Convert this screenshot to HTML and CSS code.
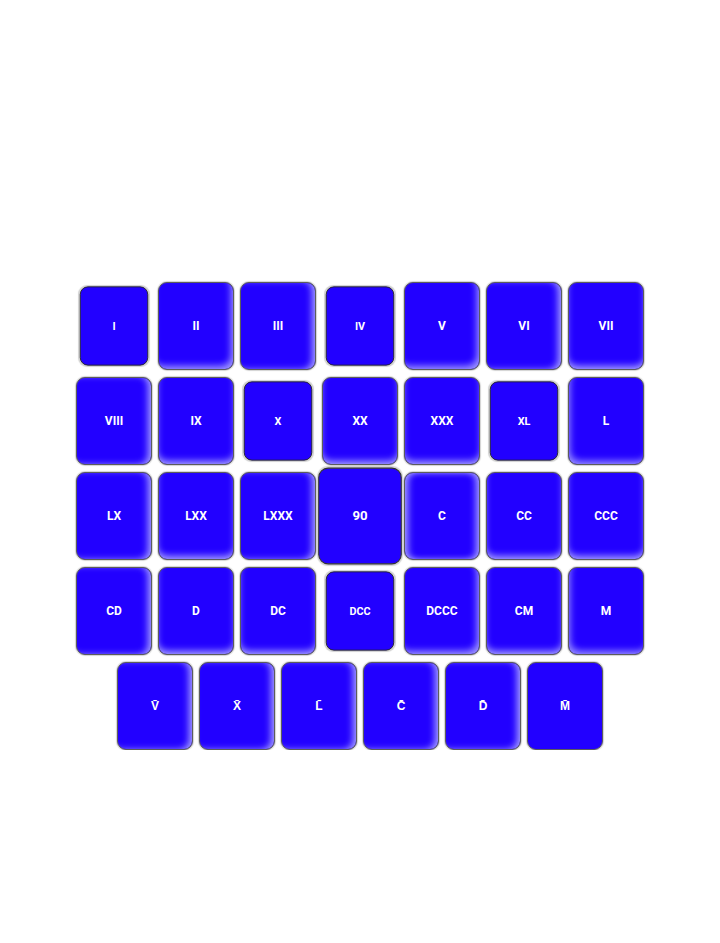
FILE: index.html
```html
<!DOCTYPE html>
<html lang="en">
<head>
    <meta charset="UTF-8">
    <meta name="viewport" content="width=device-width, initial-scale=1.0">
    <title>Roman Numerals</title>
    <link rel="stylesheet" href="styles.css">
</head>
<body>

    <div class="keypad">
        <div class="row">
            <button class="key small">I</button>
            <button class="key glow-br">II</button>
            <button class="key glow-r">III</button>
            <button class="key small">IV</button>
            <button class="key glow-br">V</button>
            <button class="key glow-r">VI</button>
            <button class="key glow-b">VII</button>
        </div>
        <div class="row">
            <button class="key glow-r">VIII</button>
            <button class="key glow-b">IX</button>
            <button class="key small">X</button>
            <button class="key glow-b">XX</button>
            <button class="key glow-b">XXX</button>
            <button class="key small">XL</button>
            <button class="key glow-bl">L</button>
        </div>
        <div class="row">
            <button class="key glow-r">LX</button>
            <button class="key glow-b">LXX</button>
            <button class="key glow-r">LXXX</button>
            <button class="key big">90</button>
            <button class="key glow-lr">C</button>
            <button class="key glow-b">CC</button>
            <button class="key glow-b">CCC</button>
        </div>
        <div class="row">
            <button class="key glow-r">CD</button>
            <button class="key glow-b">D</button>
            <button class="key glow-b">DC</button>
            <button class="key small">DCC</button>
            <button class="key glow-br">DCCC</button>
            <button class="key glow-b">CM</button>
            <button class="key glow-bl">M</button>
        </div>
        <div class="row">
            <button class="key glow-r">V̄</button>
            <button class="key glow-r">X̄</button>
            <button class="key glow-r">L̄</button>
            <button class="key glow-r">C̄</button>
            <button class="key glow-r">D̄</button>
            <button class="key">M̄</button>
        </div>
    </div>

</body>
</html>
```

FILE: styles.css
```css
body {
    margin: 0;
    background: #fff;
    font-family: Roboto, "Liberation Sans", Arial, sans-serif;
}
.keypad {
    padding-top: 282px;
    display: flex;
    flex-direction: column;
    gap: 7px;
}
.row {
    display: flex;
    justify-content: center;
}
.key {
    width: 76px;
    height: 88px;
    margin: 0 3px;
    padding: 0;
    background: #2200ff;
    color: #fff;
    font-family: inherit;
    font-size: 12px;
    font-weight: bold;
    border: 1.5px solid #5c5c5c;
    border-radius: 9px;
    box-shadow: 0 0 1px 1px rgba(0, 0, 0, 0.18);
    cursor: pointer;
}
.key.small {
    transform: scale(0.9);
    border-color: #222;
}
.key.big {
    transform: scale(1.1);
    border-color: #333;
}
.glow-br {
    box-shadow: 0 0 1px 1px rgba(0, 0, 0, 0.18), inset -4px -5px 7px -2px rgba(200, 200, 255, 0.75);
}
.glow-r {
    box-shadow: 0 0 1px 1px rgba(0, 0, 0, 0.18), inset -5px -1px 7px -2px rgba(200, 200, 255, 0.8);
}
.glow-b {
    box-shadow: 0 0 1px 1px rgba(0, 0, 0, 0.18), inset 0 -5px 7px -2px rgba(200, 200, 255, 0.8);
}
.glow-bl {
    box-shadow: 0 0 1px 1px rgba(0, 0, 0, 0.18), inset 3px -5px 7px -2px rgba(200, 200, 255, 0.7);
}
.glow-lr {
    box-shadow: 0 0 1px 1px rgba(0, 0, 0, 0.18), inset 5px 0 7px -2px rgba(200, 200, 255, 0.8), inset -5px 0 7px -2px rgba(200, 200, 255, 0.8);
}
```
